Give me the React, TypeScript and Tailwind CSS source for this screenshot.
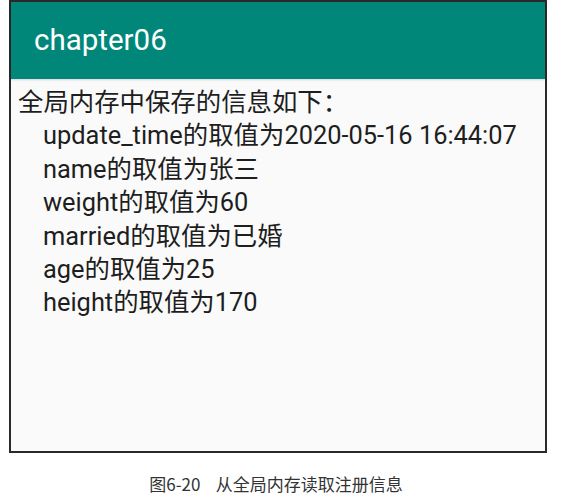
const lines = [
  "update_time的取值为2020-05-16 16:44:07",
  "name的取值为张三",
  "weight的取值为60",
  "married的取值为已婚",
  "age的取值为25",
  "height的取值为170",
]

export default function App() {
  return (
    <div
      className="w-[567px] h-[504px] bg-white"
      style={{ fontFamily: "Roboto, 'Noto Sans CJK SC', sans-serif" }}
    >
      <div className="ml-[9px] w-[538px] h-[453px] border-2 border-[#2a2a2a] bg-[#fafafa] flex flex-col">
        <div className="h-[77px] bg-[#00877a] flex items-center pl-[23px] pb-[1px] shadow-[0_1px_2px_rgba(0,0,0,0.15)]">
          <span className="text-[29.5px] text-white">chapter06</span>
        </div>
        <div className="pt-[7px] pl-[7px] text-[25.4px] leading-[33.4px] text-[#1e1e1e]">
          <div>全局内存中保存的信息如下：</div>
          {lines.map((l) => (
            <div key={l} className="pl-[25px]">
              {l}
            </div>
          ))}
        </div>
      </div>
      <div
        className="mt-[18px] text-center text-[17px] text-[#333] pr-[15px]"
        style={{ fontFamily: "'Noto Sans CJK SC', sans-serif" }}
      >
        图6-20&nbsp;&nbsp;&nbsp;&nbsp;从全局内存读取注册信息
      </div>
    </div>
  )
}
